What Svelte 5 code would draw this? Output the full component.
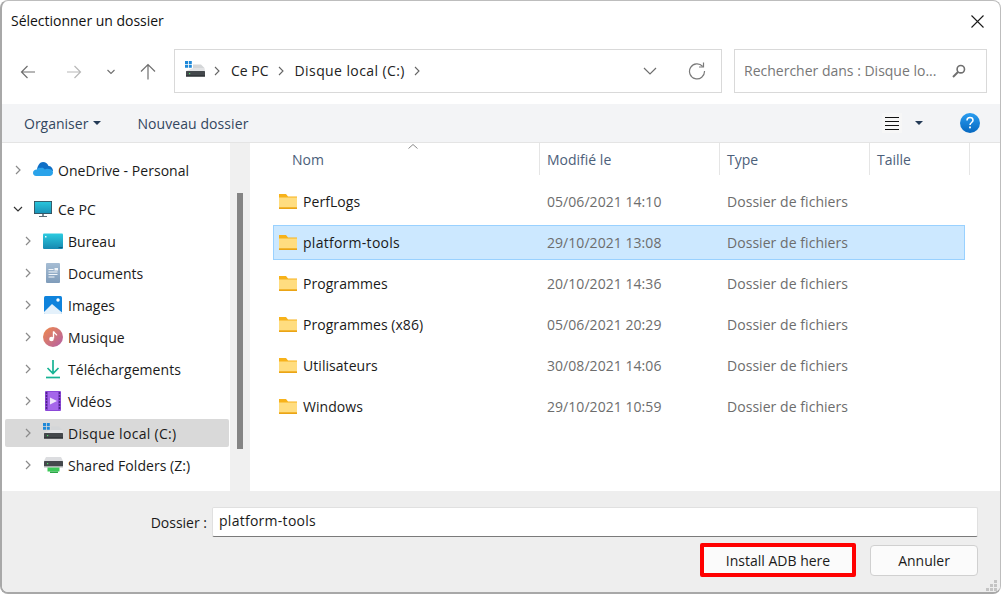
<script>
  const files = [
    { name: 'PerfLogs', date: '05/06/2021 14:10' },
    { name: 'platform-tools', date: '29/10/2021 13:08', selected: true },
    { name: 'Programmes', date: '20/10/2021 14:36' },
    { name: 'Programmes (x86)', date: '05/06/2021 20:29' },
    { name: 'Utilisateurs', date: '30/08/2021 14:06' },
    { name: 'Windows', date: '29/10/2021 10:59' }
  ];

  const places = [
    { name: 'Bureau', icon: desktop },
    { name: 'Documents', icon: documents },
    { name: 'Images', icon: images },
    { name: 'Musique', icon: music },
    { name: 'Téléchargements', icon: downloads },
    { name: 'Vidéos', icon: videos },
    { name: 'Disque local (C:)', icon: drive, selected: true },
    { name: 'Shared Folders (Z:)', icon: shared }
  ];

  const columns = [
    { label: 'Nom', width: 267, first: true },
    { label: 'Modifié le', width: 180 },
    { label: 'Type', width: 150 },
    { label: 'Taille', width: 100 }
  ];
</script>

{#snippet chevron(open)}
  <svg class="tree-arrow" width="10" height="10" viewBox="0 0 10 10">
    {#if open}
      <path d="M1 3l4 4 4-4" fill="none" stroke="#333" stroke-width="1.2" />
    {:else}
      <path d="M3 1l4 4-4 4" fill="none" stroke="#8a8a8a" stroke-width="1.2" />
    {/if}
  </svg>
{/snippet}

{#snippet folder()}
  <svg class="folder" width="18" height="15" viewBox="0 0 18 15">
    <path d="M0 0h7l2 2.500h9V15H0z" fill="#f7b21a" />
    <path d="M0 3.500h18v10H0z" fill="#ffdd80" />
    <path d="M0 13.500h18V15H0z" fill="#eaa416" />
  </svg>
{/snippet}

{#snippet onedrive()}
  <svg width="20" height="20" viewBox="0 0 20 20">
    <path d="M4 10C4.500 5.500 7 2 10 2c2.500 0 4.500 1.500 5.500 4C18 6 20 8 20 11L4 14z" fill="#0f6fc6" />
    <path d="M3.200 16C1 16 0 14.500 0 13c0-2 1.500-3.500 3.800-3.500 1-1.500 2.500-2 4-1.500 1.500-.5 3 0 4 1.500 1-.7 2.500-1 4-.5 2.500 0 4.200 1.500 4.200 3.500 0 2-1.500 3.500-3.500 3.500z" fill="#2aa3ea" />
  </svg>
{/snippet}

{#snippet monitor()}
  <svg width="20" height="20" viewBox="0 0 20 20">
    <defs>
      <linearGradient id="screen" x1="0" y1="0" x2="0" y2="1">
        <stop offset="0" stop-color="#28c6dc" />
        <stop offset="1" stop-color="#1a93b8" />
      </linearGradient>
    </defs>
    <rect x="1" y="2" width="18" height="13" fill="#3a4a55" />
    <rect x="1.800" y="2.800" width="16.400" height="11.400" fill="url(#screen)" />
    <rect x="9" y="15" width="2" height="2" fill="#7a8a94" />
    <rect x="6" y="17" width="8" height="1" fill="#5d6b75" />
  </svg>
{/snippet}

{#snippet desktop()}
  <svg width="20" height="20" viewBox="0 0 20 20">
    <defs>
      <linearGradient id="desk" x1="0" y1="0" x2="0" y2="1">
        <stop offset="0" stop-color="#2ccbe0" />
        <stop offset="1" stop-color="#1688b0" />
      </linearGradient>
    </defs>
    <rect x="0" y="2.500" width="20" height="15.500" rx="1" fill="url(#desk)" />
    <rect x="2" y="5" width="1.500" height="1.500" fill="#e8fbff" />
    <rect x="15.500" y="16" width="4" height="1" fill="#0d5f80" />
  </svg>
{/snippet}

{#snippet documents()}
  <svg width="20" height="20" viewBox="0 0 20 20">
    <defs>
      <linearGradient id="doc" x1="0" y1="0" x2="0" y2="1">
        <stop offset="0" stop-color="#a6bdd4" />
        <stop offset="1" stop-color="#7f9cba" />
      </linearGradient>
    </defs>
    <rect x="3" y="0" width="14" height="20" rx="1" fill="url(#doc)" />
    <path d="M5.500 6.500h5M5.500 9h9M5.500 11.500h9M5.500 14h6" stroke="#f2f6fa" stroke-width="1" />
    <rect x="11.500" y="5" width="3.500" height="2.500" fill="#f2f6fa" />
  </svg>
{/snippet}

{#snippet images()}
  <svg width="20" height="20" viewBox="0 0 20 20">
    <rect x="1" y="1" width="18" height="18" rx="1.500" fill="#0f83dc" />
    <circle cx="15" cy="5" r="1.700" fill="#fff" />
    <path d="M1 17l8-8 10 8.500V18a1 1 0 0 1-1 1H2a1 1 0 0 1-1-1z" fill="#e4f1fb" />
  </svg>
{/snippet}

{#snippet music()}
  <svg width="20" height="20" viewBox="0 0 20 20">
    <defs>
      <linearGradient id="note" x1="0" y1="0" x2="1" y2="1">
        <stop offset="0" stop-color="#f08a4a" />
        <stop offset="1" stop-color="#b25fa8" />
      </linearGradient>
    </defs>
    <circle cx="10" cy="10" r="10" fill="url(#note)" />
    <path d="M10.500 4.500v7" stroke="#fff" stroke-width="1.400" />
    <path d="M10.500 4.500c.5 2 3 2 3.200 3.800" fill="none" stroke="#fff" stroke-width="1.400" />
    <circle cx="8.500" cy="12" r="2.300" fill="#fff" />
  </svg>
{/snippet}

{#snippet downloads()}
  <svg width="20" height="20" viewBox="0 0 20 20">
    <path d="M10 1v13M4.500 9l5.500 5.500L15.500 9" fill="none" stroke="#18b394" stroke-width="1.700" />
    <path d="M3 18.500h14" stroke="#18b394" stroke-width="1.700" />
  </svg>
{/snippet}

{#snippet videos()}
  <svg width="20" height="20" viewBox="0 0 20 20">
    <rect x="2" y="0" width="16" height="20" rx="1" fill="#8b47d8" />
    <rect x="5" y="1" width="10" height="18" fill="#a566ea" />
    <path d="M2.800 2h1.400M2.800 5h1.400M2.800 8h1.400M2.800 11h1.400M2.800 14h1.400M2.800 17h1.400M15.800 2h1.400M15.800 5h1.400M15.800 8h1.400M15.800 11h1.400M15.800 14h1.400M15.800 17h1.400" stroke="#3d1c70" stroke-width="1.400" />
    <path d="M7 6.500l7 3.500-7 3.500z" fill="#efe4fb" />
  </svg>
{/snippet}

{#snippet drive()}
  <svg width="20" height="20" viewBox="0 0 20 20">
    <path d="M8 3.500h8l3.500 3.500H8z" fill="#d4d6d8" />
    <path d="M1 10l7-3h11.500l.5 3z" fill="#e2e3e5" />
    <rect x="1" y="10" width="19" height="5.500" rx=".5" fill="#44484c" />
    <rect x="1" y="14.500" width="19" height="1" fill="#23262a" />
    <rect x="4" y="12" width="1.200" height="1.200" fill="#4fe06a" />
    <path d="M0 0h3v3H0zM3.800 0h3v3h-3zM0 3.800h3v3H0zM3.800 3.800h3v3h-3z" fill="#1e88d8" />
  </svg>
{/snippet}

{#snippet shared()}
  <svg width="20" height="20" viewBox="0 0 20 20">
    <path d="M3 2h15l2 4H1z" fill="#dcdde0" />
    <rect x="1" y="6" width="19" height="5.500" rx=".5" fill="#44484c" />
    <rect x="4" y="8" width="1.200" height="1.200" fill="#4fe06a" />
    <rect x="1" y="11.500" width="19" height="1" fill="#b6b8ba" />
    <rect x="4.500" y="12.500" width="12" height="4" fill="#3cc858" />
    <rect x="7" y="16.500" width="8" height="1.500" fill="#2ba646" />
  </svg>
{/snippet}

<div class="dialog">
  <header class="titlebar">
    <span class="title">Sélectionner un dossier</span>
    <svg width="13" height="13" viewBox="0 0 13 13">
      <path d="M.5.500l12 12M12.500.500l-12 12" stroke="#1a1a1a" stroke-width="1.100" />
    </svg>
  </header>

  <div class="navbar">
    <div class="nav-buttons">
      <svg class="back" width="16" height="14" viewBox="0 0 16 14">
        <path d="M15 7H1.500M7.500 1l-6 6 6 6" fill="none" stroke="#6f6f6f" stroke-width="1.200" />
      </svg>
      <svg class="forward" width="16" height="14" viewBox="0 0 16 14">
        <path d="M1 7h13.500M8.500 1l6 6-6 6" fill="none" stroke="#b8b8b8" stroke-width="1.200" />
      </svg>
      <svg class="recent" width="8" height="6" viewBox="0 0 8 6">
        <path d="M.5 1l3.500 3.500L7.500 1" fill="none" stroke="#6f6f6f" stroke-width="1.100" />
      </svg>
      <svg class="up" width="16" height="17" viewBox="0 0 16 17">
        <path d="M8 16.500V1.500M1 8.500l7-7 7 7" fill="none" stroke="#6f6f6f" stroke-width="1.200" />
      </svg>
    </div>
    <div class="address">
      {@render drive()}
      <svg class="crumb-sep" width="6" height="10" viewBox="0 0 6 10"><path d="M1 1l4 4-4 4" fill="none" stroke="#666" stroke-width="1.100" /></svg>
      <span>Ce PC</span>
      <svg class="crumb-sep" width="6" height="10" viewBox="0 0 6 10"><path d="M1 1l4 4-4 4" fill="none" stroke="#666" stroke-width="1.100" /></svg>
      <span class="wide">Disque local (C:)</span>
      <svg class="crumb-sep" width="6" height="10" viewBox="0 0 6 10"><path d="M1 1l4 4-4 4" fill="none" stroke="#666" stroke-width="1.100" /></svg>
      <svg class="address-open" width="14" height="8" viewBox="0 0 14 8">
        <path d="M1 1l6 6 6-6" fill="none" stroke="#6f6f6f" stroke-width="1.200" />
      </svg>
      <svg class="refresh" width="18" height="18" viewBox="0 0 18 18">
        <path d="M14.700 4.500A7.500 7.500 0 1 0 16.500 9" fill="none" stroke="#7a7a7a" stroke-width="1.200" />
        <path d="M15.500 .5v4.500H11" fill="none" stroke="#7a7a7a" stroke-width="1.200" />
      </svg>
    </div>
    <div class="search">
      <span>Rechercher dans : Disque lo...</span>
      <svg width="14" height="14" viewBox="0 0 14 14">
        <circle cx="8.800" cy="5.200" r="3.700" fill="none" stroke="#6f6f6f" stroke-width="1.600" />
        <path d="M6 8L1 13" stroke="#6f6f6f" stroke-width="2" />
      </svg>
    </div>
  </div>

  <div class="toolbar">
    <span class="tool organiser">Organiser <i class="caret"></i></span>
    <span class="tool">Nouveau dossier</span>
    <span class="view-switch">
      <span class="view-lines"><i></i><i></i><i></i><i></i></span>
      <i class="caret"></i>
    </span>
    <svg class="help" width="20" height="20" viewBox="0 0 20 20">
      <defs>
        <linearGradient id="help" x1="0" y1="0" x2="0" y2="1">
          <stop offset="0" stop-color="#2a9df0" />
          <stop offset="1" stop-color="#0668c0" />
        </linearGradient>
      </defs>
      <circle cx="10" cy="10" r="10" fill="url(#help)" />
      <path d="M7 7.500C7 5.500 8.500 4.500 10 4.500s3 1 3 2.700c0 2.300-3 2.300-3 4.800" fill="none" stroke="#fff" stroke-width="1.500" />
      <rect x="9.100" y="13.500" width="1.800" height="1.800" fill="#fff" />
    </svg>
  </div>

  <div class="main">
    <nav class="tree">
      <div class="tree-row top onedrive">
        {@render chevron(false)}
        {@render onedrive()}
        <span>OneDrive - Personal</span>
      </div>
      <div class="tree-row top">
        {@render chevron(true)}
        {@render monitor()}
        <span>Ce PC</span>
      </div>
      {#each places as place}
        <div class="tree-row" class:selected={place.selected}>
          {@render chevron(false)}
          {@render place.icon()}
          <span>{place.name}</span>
        </div>
      {/each}
    </nav>

    <div class="scrollbar"><div class="thumb"></div></div>

    <section class="list">
      <div class="list-header">
        {#each columns as col}
          <div class="col-head" class:first={col.first} style="width: {col.width}px">{col.label}</div>
        {/each}
        <svg class="sort" width="10" height="5" viewBox="0 0 10 5">
          <path d="M.5 4.500L5 .5l4.500 4" fill="none" stroke="#8a8a8a" />
        </svg>
      </div>

      {#each files as file}
        <div class="file-row" class:selected={file.selected}>
          <div class="file-name">
            {@render folder()}
            <span>{file.name}</span>
          </div>
          <div class="file-date">{file.date}</div>
          <div class="file-type">Dossier de fichiers</div>
        </div>
      {/each}
    </section>
  </div>

  <footer class="footer">
    <div class="name-row">
      <label for="folder-name">Dossier :</label>
      <input id="folder-name" value="platform-tools" />
    </div>
    <div class="actions">
      <button class="primary">Install ADB here</button>
      <button>Annuler</button>
    </div>
    <svg class="grip" width="12" height="12" viewBox="0 0 12 12">
      <path d="M8 0h3v3H8zM4 4h3v3H4zM8 4h3v3H8zM0 8h3v3H0zM4 8h3v3H4zM8 8h3v3H8z" fill="#c4c4c4" />
    </svg>
  </footer>
</div>

<style>
  :global(body) {
    background: #fff;
    font-family: "Open Sans", "Noto Sans", sans-serif;
    font-size: 14px;
    color: #1a1a1a;
  }

  .dialog {
    box-sizing: border-box;
    position: relative;
    width: 1001px;
    height: 594px;
    display: flex;
    flex-direction: column;
    border: 1px solid #bdbdbd;
    border-bottom: 2px solid #a8a8a8;
    border-left: 2px solid #a8a8a8;
    border-radius: 8px;
    overflow: hidden;
    background: #fff;
  }

  .titlebar {
    box-sizing: border-box;
    height: 40px;
    flex: none;
    display: flex;
    align-items: center;
    justify-content: space-between;
    padding: 0 16px 0 9px;
  }

  .title {
    font-size: 14px;
    letter-spacing: -.02px;
    color: #111;
    padding-bottom: 1px;
  }

  .navbar {
    height: 63px;
    flex: none;
    display: flex;
    padding: 8px 13px 10px 0;
    box-sizing: border-box;
  }

  .nav-buttons {
    width: 172px;
    flex: none;
    position: relative;
    display: flex;
    align-items: center;
  }

  .back { margin-left: 18px; }
  .forward { margin-left: 30px; }
  .recent { margin-left: 25px; }
  .up { margin-left: 25px; }

  .address {
    box-sizing: border-box;
    width: 548px;
    height: 44px;
    display: flex;
    align-items: center;
    border: 1px solid #d9d9d9;
    padding: 0 15px 0 10px;
    font-size: 14px;
    color: #222;
  }

  .address span {
    padding-bottom: 1px;
  }

  .address .wide { letter-spacing: .4px; }

  .crumb-sep { margin: 0 11px 0 9px; }

  .address-open { margin-left: auto; }
  .refresh { margin-left: 31px; }

  .search {
    box-sizing: border-box;
    width: 253px;
    height: 44px;
    margin-left: 12px;
    display: flex;
    align-items: center;
    justify-content: space-between;
    border: 1px solid #d9d9d9;
    padding: 0 20px 0 9px;
    color: #777;
    font-size: 14px;
  }

  .search span { padding-bottom: 1px; }

  .toolbar {
    height: 39px;
    flex: none;
    box-sizing: border-box;
    display: flex;
    align-items: center;
    padding: 0 0 0 22px;
    background: #f3f4f6;
    border-bottom: 1px solid #e4e4e4;
    color: #33475f;
  }

  .tool {
    font-size: 14px;
    letter-spacing: .08px;
  }

  .organiser {
    display: inline-flex;
    align-items: center;
    gap: 5px;
    margin-right: 36px;
    letter-spacing: 0;
  }

  .caret {
    display: inline-block;
    width: 0;
    height: 0;
    border: 4px solid transparent;
    border-top: 4px solid #243a56;
    border-bottom: 0;
  }

  .view-switch {
    display: flex;
    align-items: center;
    margin-left: auto;
    gap: 13px;
  }

  .view-lines {
    width: 20px;
    height: 20px;
    background: #f7f7f7;
    display: flex;
    flex-direction: column;
    justify-content: center;
    align-items: center;
    gap: 3px;
  }

  .view-lines i {
    display: block;
    width: 14px;
    height: 1px;
    background: #111;
  }

  .help { margin: 0 20px 0 37px; }

  .main {
    flex: 1;
    min-height: 0;
    display: flex;
  }

  .tree {
    width: 228px;
    flex: none;
    box-sizing: border-box;
    padding: 13px 0 0 3px;
  }

  .tree-row {
    height: 28px;
    width: 224px;
    margin-bottom: 4px;
    display: flex;
    align-items: center;
    border-radius: 2px;
    padding-left: 18px;
    box-sizing: border-box;
    color: #1a1a1a;
  }

  .tree-row.top { padding-left: 8px; }
  .tree-row.onedrive { margin-bottom: 11px; }
  .tree-row.selected { background: #d9d9d9; }
  .tree-row.selected span { letter-spacing: .3px; }

  .tree-arrow { margin-right: 10px; flex: none; }
  .tree-row span {
    margin-left: 5px;
    letter-spacing: .04px;
  }

  .scrollbar {
    width: 20px;
    flex: none;
    background: #f0f0f0;
    padding-top: 50px;
    box-sizing: border-box;
  }

  .thumb {
    width: 6px;
    height: 256px;
    margin-left: 7px;
    background: #858585;
  }

  .list {
    flex: 1;
    min-width: 0;
    padding-left: 23px;
    position: relative;
  }

  .list-header {
    height: 32px;
    display: flex;
    margin-bottom: 9px;
    color: #4c607a;
  }

  .col-head {
    box-sizing: border-box;
    padding: 7px 0 0 7px;
    border-right: 1px solid #e5e5e5;
    flex: none;
  }

  .col-head.first { padding-left: 19px; }

  .sort {
    position: absolute;
    left: 158px;
    top: 1px;
  }

  .file-row {
    box-sizing: border-box;
    width: 692px;
    height: 35px;
    margin-bottom: 6px;
    display: flex;
    align-items: center;
    border: 1px solid transparent;
  }

  .file-row.selected {
    background: #cce8ff;
    border-color: #99d1ff;
  }

  .file-name {
    width: 273px;
    flex: none;
    display: flex;
    align-items: center;
    padding-left: 5px;
    box-sizing: border-box;
  }

  .folder { margin-right: 6px; flex: none; }

  .file-name span {
    letter-spacing: .05px;
  }

  .file-row.selected .file-name span { letter-spacing: .27px; }

  .file-date {
    width: 180px;
    flex: none;
    color: #6d6d6d;
    letter-spacing: .05px;
  }

  .file-type {
    color: #6d6d6d;
    letter-spacing: .05px;
  }

  .footer {
    height: 101px;
    flex: none;
    position: relative;
    background: #eeeeee;
    padding-top: 16px;
    box-sizing: border-box;
  }

  .name-row {
    display: flex;
    align-items: center;
    height: 30px;
  }

  .name-row label {
    width: 205px;
    box-sizing: border-box;
    text-align: right;
    color: #1a1a1a;
  }

  .name-row input {
    box-sizing: border-box;
    width: 766px;
    height: 30px;
    margin-left: 5px;
    border: 1px solid #e0e0e0;
    border-bottom: 1px solid #7a7a7a;
    border-radius: 2px;
    background: #fff;
    padding: 0 6px 3px;
    font: inherit;
    letter-spacing: .27px;
    color: #1a1a1a;
    outline: none;
  }

  .actions {
    display: flex;
    align-items: center;
    justify-content: flex-end;
    gap: 14px;
    margin-top: 6px;
    padding-right: 22px;
  }

  .actions button {
    box-sizing: border-box;
    width: 108px;
    height: 31px;
    background: #fbfbfb;
    border: 1px solid #d0d0d0;
    border-radius: 4px;
    font: inherit;
    color: #1a1a1a;
    padding: 0;
  }

  .actions .primary {
    width: 156px;
    height: 34px;
    border: 4px solid #ff0000;
    border-radius: 2px;
  }

  .grip {
    position: absolute;
    right: 2px;
    bottom: 0;
  }
</style>
